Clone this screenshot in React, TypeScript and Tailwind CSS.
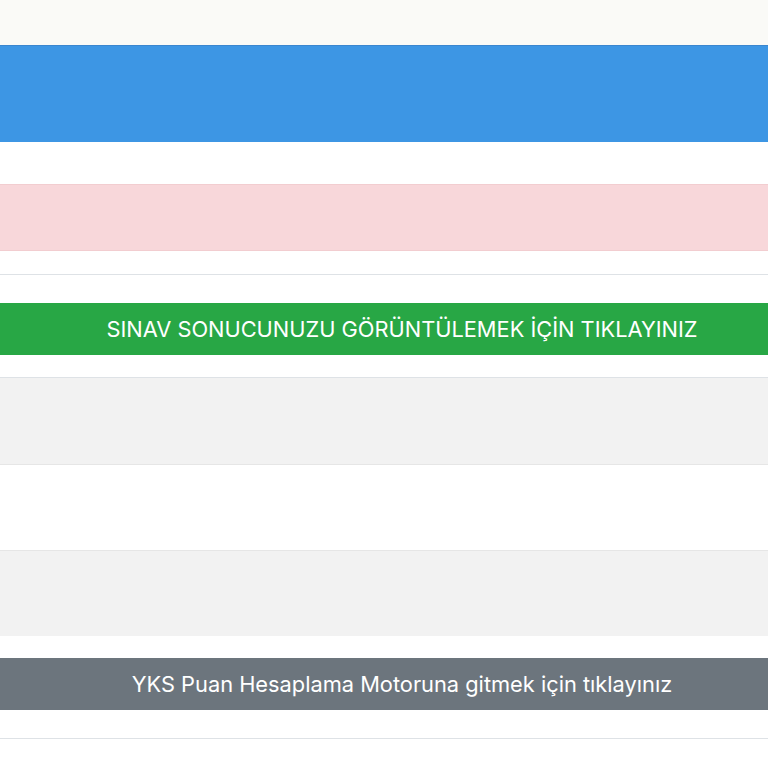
import React from "react";

export default function App() {
  return (
    <div className="w-[768px] h-[768px] overflow-hidden bg-white" style={{ fontFamily: "Inter, 'Noto Sans', sans-serif" }}>
      <div className="h-[45px] bg-[#fafaf7]" />
      <div className="h-[97px] bg-[#3d96e4] border-t border-[#3a86cf]" />
      <div className="h-[42px]" />
      <div className="h-[67px] bg-[#f8d7da] border-y border-[#f2cdd0]" />
      <div className="h-[23px]" />
      <div className="border-t border-[#dee2e6]" />
      <div className="h-[28px]" />
      <div className="h-[52px] bg-[#28a745] flex items-center justify-center pl-[36px] text-white text-[21.8px] whitespace-nowrap">
        SINAV SONUCUNUZU GÖRÜNTÜLEMEK İÇİN TIKLAYINIZ
      </div>
      <div className="h-[22px]" />
      <div className="flex flex-col">
        <div className="h-[87px] bg-[#f2f2f2] border-t border-[#dee2e6]" />
        <div className="h-[86px] bg-white border-t border-[#e6e6e6]" />
        <div className="h-[86px] bg-[#f2f2f2] border-t border-[#e6e6e6]" />
      </div>
      <div className="h-[22px]" />
      <div className="h-[52px] bg-[#6c757d] flex items-center justify-center pl-[36px] text-white text-[21.8px] whitespace-nowrap">
        YKS Puan Hesaplama Motoruna gitmek için tıklayınız
      </div>
      <div className="h-[28px]" />
      <div className="border-t border-[#dee2e6]" />
    </div>
  );
}
